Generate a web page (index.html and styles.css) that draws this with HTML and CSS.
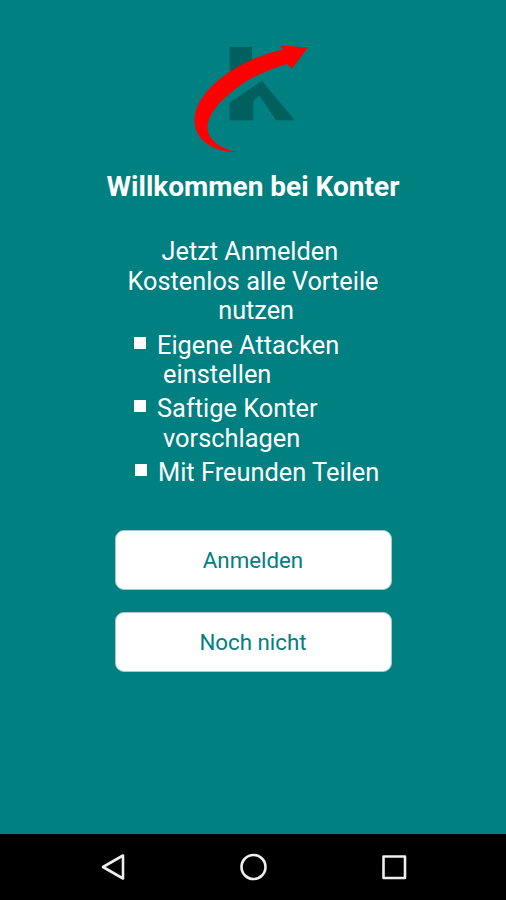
FILE: index.html
```html
<!DOCTYPE html>
<html lang="de">

<head>
    <meta charset="UTF-8">
    <meta name="viewport" content="width=device-width, initial-scale=1.0">
    <title>Konter</title>
    <link rel="stylesheet" href="styles.css">
</head>

<body>
    <main class="welcome">
        <svg class="logo" width="120" height="112" viewBox="190 43 120 112" role="img" aria-label="Konter">
            <clipPath id="cut">
                <path d="M229.500 47H252V76L229.500 92Z M229.500 103L262 81L295 120.500H229.500Z" />
            </clipPath>
            <g clip-path="url(#cut)">
                <text class="logo-letter" transform="translate(225 119) scale(1.16 1)">K</text>
            </g>
            <path class="logo-arrow" d="M308 47.500L281 45.500L283 49.500C257 55 229 69 212 86C196 102 191 118 197 132C203 145 218 152 237 152C221 149 208 140 207.500 128C207 109 236 86 256 76C267 70.500 278 66.500 287 64L292 68.500Z" />
        </svg>

        <h1 class="title">Willkommen bei Konter</h1>
        <p class="intro">Jetzt Anmelden&nbsp;<br>Kostenlos alle Vorteile<br>&nbsp;nutzen</p>

        <ul class="features">
            <li>Eigene Attacken<br>einstellen</li>
            <li>Saftige Konter<br>vorschlagen</li>
            <li>Mit Freunden Teilen</li>
        </ul>

        <div class="buttons">
            <button>Anmelden</button>
            <button>Noch nicht</button>
        </div>
    </main>

    <nav class="navbar">
        <svg width="28" height="28" viewBox="0 0 28 28">
            <path d="M4 14L24 2.500V25.500Z" />
        </svg>
        <svg width="28" height="28" viewBox="0 0 28 28">
            <circle cx="13.500" cy="14" r="12" />
        </svg>
        <svg width="28" height="28" viewBox="0 0 28 28">
            <rect x="3.500" y="3.500" width="21.500" height="21.500" />
        </svg>
    </nav>
</body>

</html>
```
FILE: styles.css
```css
body {
    display: flex;
    flex-direction: column;
    height: 100vh;
    margin: 0;
    background-color: #008080;
    font-family: Roboto, sans-serif;
    color: white;
}

.welcome {
    flex: 1;
    width: 277px;
    margin: 0 auto;
    padding-top: 43px;
}

.logo {
    display: block;
    margin-left: 75px;
    overflow: visible;
}

.logo-letter {
    font-size: 101px;
    font-weight: 900;
    fill: #006060;
    stroke: #006060;
    stroke-width: 3.5px;
}

.logo-arrow {
    fill: #ff0000;
}

.title {
    margin: 16px -20px 0;
    font-size: 28px;
    line-height: 32px;
    font-weight: bold;
    text-align: center;
    white-space: nowrap;
}

.intro {
    margin: 34px 0 0;
    font-size: 25.3px;
    line-height: 29.5px;
    text-align: center;
}

.features {
    margin: 5px 0 0 19.5px;
    padding: 0;
    list-style: none;
    font-size: 25.4px;
    line-height: 29.5px;
}

.features li {
    margin-bottom: 4.5px;
    padding-left: 29px;
    text-indent: -6px;
    white-space: nowrap;
}

.features li:last-child {
    padding-left: 30px;
}

.features li::before {
    content: "";
    display: inline-block;
    width: 12px;
    height: 12px;
    margin: 0 11px 5px -23px;
    background-color: white;
}

.buttons {
    display: flex;
    flex-direction: column;
    gap: 22px;
    margin-top: 42.5px;
}

button {
    height: 60px;
    border: 1px solid #a9c9c9;
    border-radius: 9px;
    background-color: white;
    color: #008080;
    font-family: Roboto, sans-serif;
    font-size: 22.3px;
}

.navbar {
    display: flex;
    justify-content: space-between;
    height: 66px;
    padding: 0 98px 0 99px;
    align-items: center;
    background-color: black;
}

.navbar svg {
    fill: none;
    stroke: #eeeeee;
    stroke-width: 2.6px;
    stroke-linejoin: round;
}
```
